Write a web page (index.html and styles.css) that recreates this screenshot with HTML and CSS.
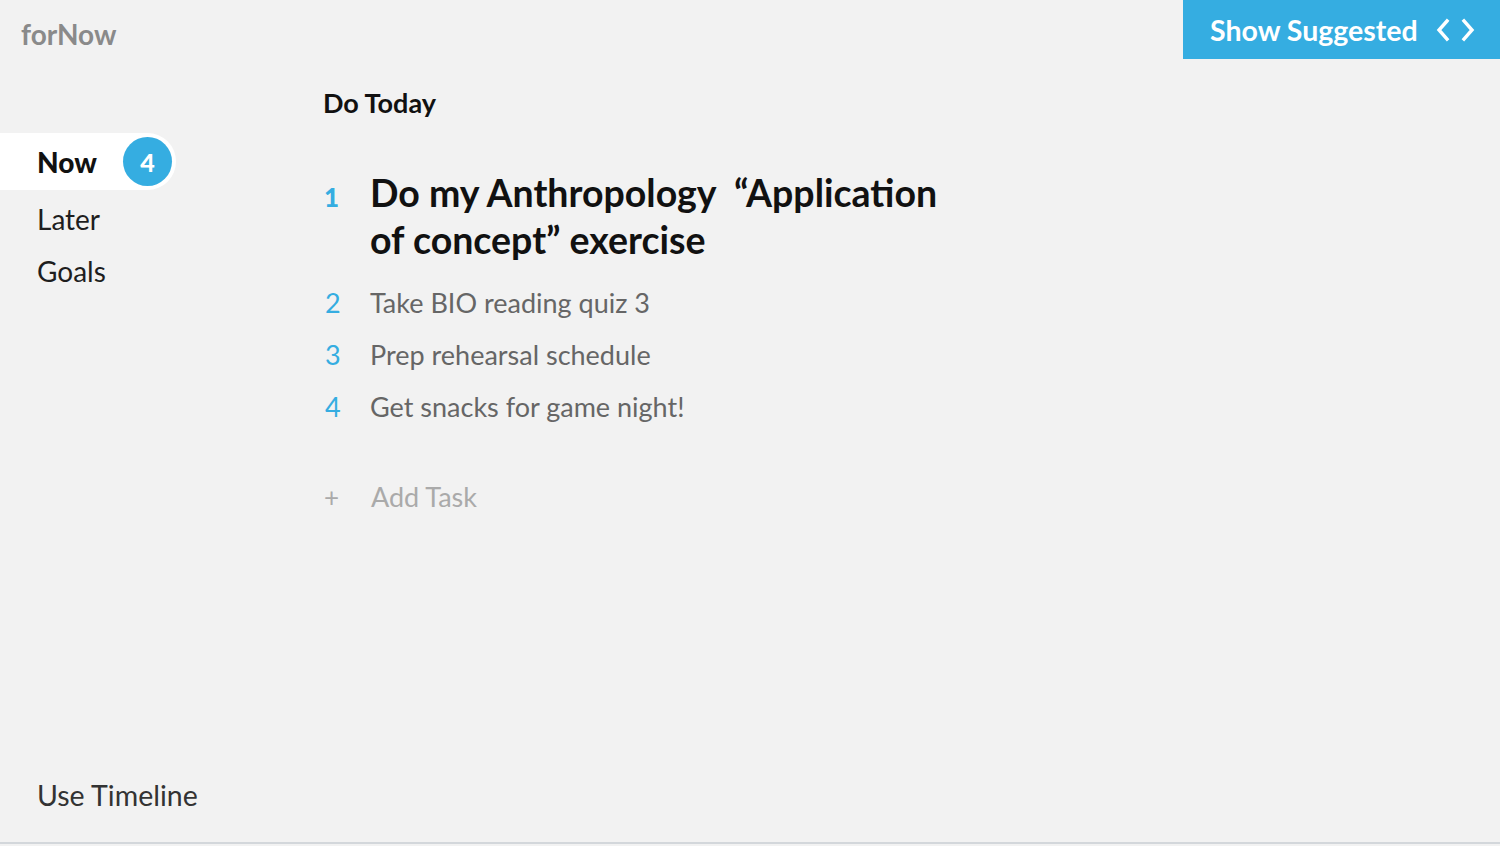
FILE: index.html
```html
<!DOCTYPE html>
<html>
<head>
<meta charset="utf-8">
<link rel="stylesheet" href="styles.css">
</head>
<body>
<div class="app">
  <aside class="sidebar">
    <div class="logo">forNow</div>
    <nav class="nav">
      <div class="nav-item active"><span class="nav-label">Now</span><span class="badge">4</span></div>
      <div class="nav-item"><span class="nav-label">Later</span></div>
      <div class="nav-item"><span class="nav-label">Goals</span></div>
    </nav>
    <div class="timeline">Use Timeline</div>
  </aside>
  <main class="main">
    <h2 class="section-title">Do Today</h2>
    <ol class="tasks">
      <li class="task first"><span class="num">1</span><span class="text">Do my Anthropology&nbsp; “Application of concept” exercise</span></li>
      <li class="task"><span class="num">2</span><span class="text">Take BIO reading quiz 3</span></li>
      <li class="task"><span class="num">3</span><span class="text">Prep rehearsal schedule</span></li>
      <li class="task"><span class="num">4</span><span class="text">Get snacks for game night!</span></li>
    </ol>
    <div class="add-task"><span class="plus">+</span><span class="add-label">Add Task</span></div>
  </main>
  <div class="suggest">
    <span class="suggest-label">Show Suggested</span>
    <svg class="chev" width="44" height="24" viewBox="0 0 44 24"><path d="M13 3 L5 12 L13 21" fill="none" stroke="#fff" stroke-width="3.4" stroke-linecap="square"/><path d="M30 3 L38 12 L30 21" fill="none" stroke="#fff" stroke-width="3.4" stroke-linecap="square"/></svg>
  </div>
</div>
</body>
</html>
```
FILE: styles.css
```css
* { box-sizing: border-box; }
html, body { margin: 0; padding: 0; }
body {
  background: #f2f2f2;
  font-family: "Lato", "Open Sans", sans-serif;
  color: #222;
  width: 1500px;
  height: 846px;
  overflow: hidden;
}
.app {
  display: flex;
  height: 844px;
  border-bottom: 2px solid #d3d7db;
  position: relative;
}
.sidebar {
  width: 300px;
  display: flex;
  flex-direction: column;
}
.logo {
  font-weight: 700;
  font-size: 28px;
  color: #8a8a8a;
  padding: 17px 0 0 21px;
  height: 133px;
}
.nav { display: flex; flex-direction: column; }
.nav-item {
  display: flex;
  align-items: center;
  height: 57px;
  padding-left: 37px;
  font-size: 28px;
  color: #1e1e1e;
}
.nav-item + .nav-item { height: 52px; }
.nav-item.active {
  background: #fff;
  width: 176px;
  border-radius: 0 29px 29px 0;
  font-weight: 900;
  color: #111;
  margin-bottom: 3px;
}
.badge {
  margin-left: auto;
  margin-right: 4px;
  width: 49px;
  height: 49px;
  border-radius: 50%;
  background: #35ade1;
  color: #fff;
  font-size: 25px;
  font-weight: 900;
  display: flex;
  align-items: center;
  justify-content: center;
}
.timeline {
  margin-top: auto;
  padding: 0 0 30px 37px;
  font-size: 28.5px;
  color: #333;
}
.main {
  flex: 1;
  padding: 87px 0 0 23px;
}
.section-title {
  margin: 0;
  font-size: 27px;
  font-weight: 700;
  color: #111;
  line-height: 32px;
}
.tasks {
  list-style: none;
  margin: 50px 0 0 0;
  padding: 0;
}
.task {
  display: flex;
  align-items: baseline;
  font-size: 27px;
  line-height: 52px;
  color: #666;
}
.num {
  width: 47px;
  color: #35ade1;
  padding-left: 2px;
}
.task.first {
  font-size: 37.5px;
  font-weight: 700;
  line-height: 47px;
  color: #111;
  margin-bottom: 14px;
}
.task.first .num { font-size: 26px; font-weight: 900; padding-left: 1px; }
.task.first .text { width: 600px; }
.add-task {
  display: flex;
  align-items: baseline;
  margin-top: 38px;
  font-size: 27px;
  color: #aaa;
  line-height: 52px;
}
.plus { width: 48px; padding-left: 1px; font-size: 26px; }
.suggest {
  position: absolute;
  top: 0;
  right: 0;
  width: 317px;
  height: 59px;
  background: #35ade1;
  display: flex;
  align-items: center;
  padding-left: 27px;
  color: #fff;
  font-weight: 700;
  font-size: 28.5px;
}
.suggest-label { width: 222px; }
.chev { margin-left: 2px; }
```
